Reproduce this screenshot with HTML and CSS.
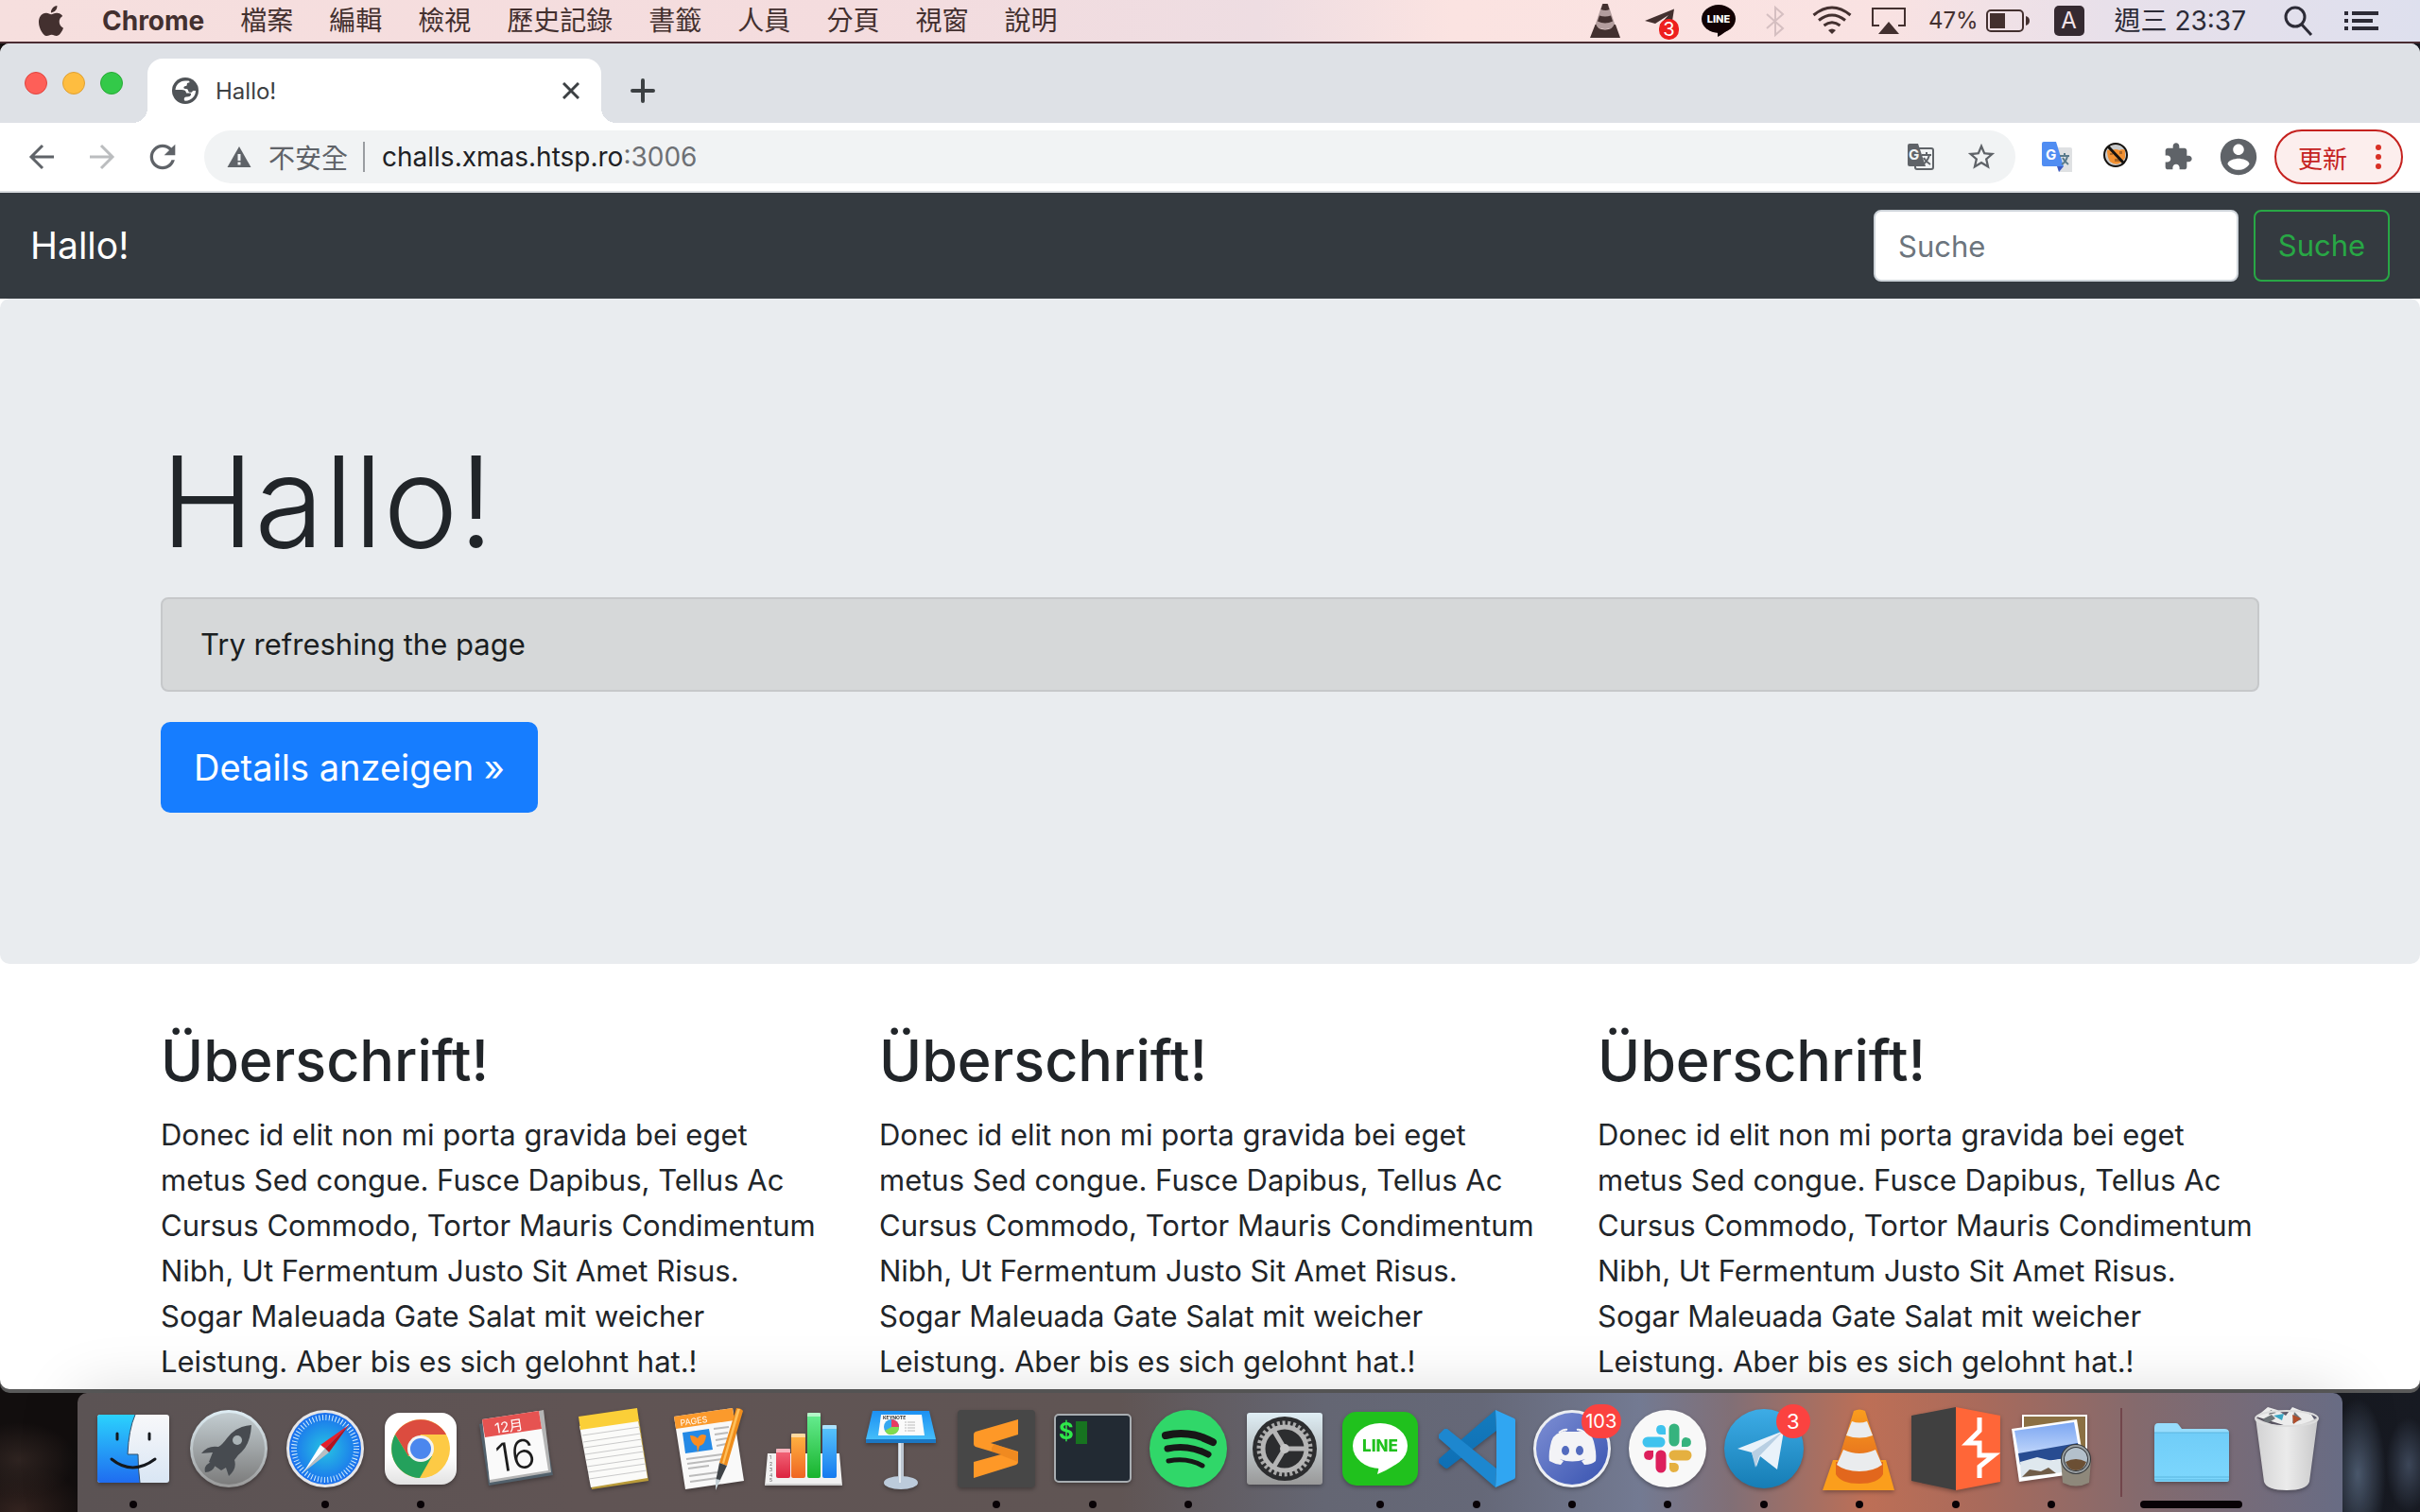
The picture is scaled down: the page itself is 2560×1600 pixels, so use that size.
FILE: index.html
```html
<!DOCTYPE html>
<html lang="zh-Hant">
<head>
<meta charset="utf-8">
<title>Hallo!</title>
<link rel="stylesheet" href="styles.css">
</head>
<body>
<header class="menubar">
  <nav class="menus">
    <button class="apple" aria-label="Apple"><svg width="32" height="32" viewBox="0 0 24 24"><path fill="currentColor" d="M12.152 6.896c-.948 0-2.415-1.078-3.96-1.04-2.04.027-3.91 1.183-4.961 3.014-2.117 3.675-.546 9.103 1.519 12.09 1.013 1.454 2.208 3.09 3.792 3.039 1.52-.065 2.09-.987 3.935-.987 1.831 0 2.35.987 3.96.948 1.637-.026 2.676-1.48 3.676-2.948 1.156-1.688 1.636-3.325 1.662-3.415-.039-.013-3.182-1.221-3.22-4.857-.026-3.04 2.48-4.494 2.597-4.559-1.429-2.09-3.623-2.324-4.39-2.376-2-.156-3.675 1.09-4.61 1.09zM15.53 3.83c.843-1.012 1.4-2.427 1.245-3.83-1.207.052-2.662.805-3.532 1.818-.78.896-1.454 2.338-1.273 3.714 1.338.104 2.715-.688 3.559-1.701"/></svg></button>
    <button class="app-name">Chrome</button>
    <button>檔案</button>
    <button>編輯</button>
    <button>檢視</button>
    <button>歷史記錄</button>
    <button>書籤</button>
    <button>人員</button>
    <button>分頁</button>
    <button>視窗</button>
    <button>說明</button>
  </nav>
  <div class="status">
    <div class="status-icons">
      <button aria-label="VLC"><svg width="40" height="44" viewBox="0 0 40 44"><path fill="#b39d9d" d="M17 4h6l8 24q-11 6-22 0z"/><path fill="#43302f" d="M17.500 4h5l2 6q-4 2-9 0zM14 16.500q6 2 12 0l2 6q-8 4-16 0zM9.500 26h1q1 5 9.500 5.500 8-.5 9.500-5.500h1.500l5 14H4z"/></svg></button>
      <button aria-label="Telegram"><svg width="44" height="44" viewBox="0 0 44 44"><path fill="#43302f" d="M4 22 35 9.500 31 35 20 26l9-10-14 9z"/><rect x="19" y="20" width="21" height="22" rx="10" fill="#ee1f1e"/><text x="29.500" y="38" text-anchor="middle" font-size="20" fill="#fff">3</text></svg></button>
      <button aria-label="LINE"><svg width="40" height="44" viewBox="0 0 40 44"><ellipse cx="20" cy="20" rx="18" ry="15" fill="#120204"/><path fill="#120204" d="M19 34v5q8-4 14-11z"/><text x="20" y="24" text-anchor="middle" font-size="11" font-weight="800" fill="#fff">LINE</text></svg></button>
      <button aria-label="藍牙"><svg width="40" height="44" viewBox="0 0 40 44"><path fill="none" stroke="#d5bfc1" stroke-width="2" d="m11 15 17 15-8 7V8l8 7-17 15"/></svg></button>
      <button aria-label="Wi-Fi"><svg width="44" height="44" viewBox="0 0 44 44" fill="none" stroke="#43302f" stroke-width="3"><path d="M2.500 16q19.500-16 39 0M8 21.500q14-11 28 0M13.500 27q8.500-6.500 17 0"/><path fill="#43302f" stroke="none" d="M18 32q4-3 8 0l-4 4z"/></svg></button>
      <button aria-label="AirPlay"><svg width="40" height="44" viewBox="0 0 40 44"><path fill="none" stroke="#43302f" stroke-width="2" d="M10 27H3V9h34v18h-7"/><path fill="#43302f" d="m20 23 11 13H9z"/></svg></button>
    </div>
    <button class="battery"><span>47%</span><svg width="46" height="24" viewBox="0 0 46 24"><rect x="1" y="1" width="38" height="22" rx="4" fill="none" stroke="#43302f" stroke-width="2"/><path fill="#43302f" d="M4 4h16v16H4zM42 7q4 1 4 5t-4 5z"/></svg></button>
    <button class="input-source" aria-label="輸入法"><span>A</span></button>
    <button class="clock">週三 23:37</button>
    <button aria-label="搜尋"><svg width="32" height="36" viewBox="0 0 32 36" fill="none" stroke="#2c2b36" stroke-width="3"><circle cx="12" cy="14" r="10"/><path d="m19 22 10 11"/></svg></button>
    <button aria-label="通知中心"><svg width="36" height="20" viewBox="0 0 36 20" fill="#2c2b36"><path d="M0 0h4v4H0zM8 0h28v4H8zM0 8h4v4H0zM8 8h22v4H8zM0 16h4v4H0zM8 16h28v4H8z"/></svg></button>
  </div>
</header>

<main class="window">
  <div class="tabstrip">
    <div class="lights"><button class="light red" aria-label="關閉"></button><button class="light yellow" aria-label="縮到最小"></button><button class="light green" aria-label="全螢幕"></button></div>
    <div class="tab">
      <svg width="28" height="28" viewBox="0 0 28 28"><circle cx="14" cy="14" r="14" fill="#4f5357"/><path fill="#fff" d="M15 3.500C8.500 3 4 7.500 3.500 13H10c3 0 5 1 5 3.500h4c2 0 1.500 4-3 4-3 0-3.500 1-3 4 6 1 12-4 12-10.500h-3c-1 3-5 2-5-.5 0-1.500-2-1.500-3-1.500-2.500 0-2-3 .5-3s0-3.500 3-3.500c1.500 0 1.500-1 0-2z"/></svg>
      <span class="tab-title">Hallo!</span>
      <button class="tab-close" aria-label="關閉分頁"><svg width="18" height="18" viewBox="0 0 18 18"><path stroke="#3c4043" stroke-width="3" d="m1 1 16 16M17 1 1 17"/></svg></button>
    </div>
    <button class="new-tab" aria-label="新分頁"><svg width="26" height="26" viewBox="0 0 26 26"><path stroke="#3c4043" stroke-width="4" stroke-linecap="round" d="M13 2v22M2 13h22"/></svg></button>
  </div>

  <div class="toolbar">
    <button class="tool" aria-label="上一頁"><svg width="28" height="28" viewBox="0 0 28 28" fill="none" stroke="#5f6368" stroke-width="3"><path d="M27 14H3M15 2 3 14l12 12"/></svg></button>
    <button class="tool" aria-label="下一頁"><svg width="28" height="28" viewBox="0 0 28 28" fill="none" stroke="#bbbdbf" stroke-width="3"><path d="M1 14h24M13 2l12 12-12 12"/></svg></button>
    <button class="tool" aria-label="重新載入"><svg width="40" height="40" viewBox="0 0 24 24"><path fill="#5f6368" d="M17.650 6.350C16.200 4.900 14.210 4 12 4c-4.420 0-7.990 3.580-7.990 8s3.570 8 7.990 8c3.730 0 6.840-2.550 7.730-6h-2.080c-.82 2.330-3.040 4-5.650 4-3.310 0-6-2.690-6-6s2.690-6 6-6c1.660 0 3.140.69 4.220 1.780L13 11h7V4l-2.350 2.350z"/></svg></button>
    <div class="omnibox">
      <button class="insecure"><svg width="26" height="24" viewBox="0 0 26 24"><path fill="#5f6368" d="M13 1 25.500 23H.5z"/><path fill="#f1f3f4" d="M11.500 9h3v7h-3zM11.500 17.500h3v3h-3z"/></svg><span>不安全</span></button>
      <input class="host" type="text" aria-label="網址" value="challs.xmas.htsp.ro"><span class="port">:3006</span>
      <button class="tool" aria-label="翻譯這個網頁"><svg width="28" height="28" viewBox="0 0 28 28"><rect x="8" y="5" width="19" height="22" rx="2" fill="#f1f3f4" stroke="#5f6368" stroke-width="2"/><path fill="#5f6368" d="M2 0h9l8 24H2q-2 0-2-2V2q0-2 2-2z"/><text x="1" y="17" font-size="15" font-weight="700" fill="#f1f3f4">G</text><path fill="none" stroke="#5f6368" stroke-width="2" d="M15 12h10M20 9v3M23 12q-2 7-7 10M17 15q2 4 7 7"/></svg></button>
      <button class="tool" aria-label="加入書籤"><svg width="34" height="34" viewBox="0 0 24 24"><path fill="#5f6368" d="M22 9.240l-7.190-.62L12 2 9.190 8.630 2 9.240l5.460 4.730L5.820 21 12 17.270 18.180 21l-1.630-7.030L22 9.240zM12 15.400l-3.760 2.270 1-4.280-3.320-2.880 4.380-.38L12 6.100l1.710 4.040 4.380.38-3.320 2.880 1 4.280L12 15.400z"/></svg></button>
    </div>
    <div class="extensions">
      <button class="tool" aria-label="Google 翻譯"><svg width="32" height="32" viewBox="0 0 32 32"><path fill="#dfe1e3" d="M13 6h17q2 0 2 2v24H18z"/><path fill="#3c5bc4" d="M16 26h7l-5 6z"/><path fill="#508df2" d="M2 0h13l8 26H2q-2 0-2-2V2q0-2 2-2z"/><text x="4" y="19" font-size="15" font-weight="700" fill="#fff">G</text><path fill="none" stroke="#5a7b8c" stroke-width="2" d="M19 15h10M24 12v3M27 15q-1 6-6 9M22 17q2 4 6 7"/></svg></button>
      <button class="tool" aria-label="Cookie 擴充功能"><svg width="30" height="32" viewBox="0 0 30 32"><circle cx="13" cy="14" r="12" fill="#c9cacb" stroke="#15120f" stroke-width="2"/><path fill="#f29132" d="M4 9q3-1 5 0 4-2 8 0 3-2 6 0v8q-7 11-16 4-3-5-3-12z"/><path fill="#ad6827" d="M7 12h3v2H7zM12 18h7v3h-7zM17 10h3v3h-3z"/><path stroke="#15120f" stroke-width="3" d="m5 5 17 18"/></svg></button>
      <button class="tool" aria-label="擴充功能"><svg width="32" height="32" viewBox="0 0 24 24"><path fill="#5f6368" d="M20.500 11H19V7c0-1.100-.9-2-2-2h-4V3.500C13 2.120 11.880 1 10.500 1S8 2.120 8 3.500V5H4c-1.100 0-1.990.9-1.990 2v3.800H3.500c1.490 0 2.700 1.210 2.700 2.700s-1.210 2.700-2.700 2.700H2V20c0 1.100.9 2 2 2h3.800v-1.500c0-1.490 1.210-2.700 2.700-2.700 1.490 0 2.700 1.210 2.700 2.700V22H17c1.100 0 2-.9 2-2v-4h1.500c1.380 0 2.500-1.120 2.500-2.500S21.880 11 20.500 11z"/></svg></button>
      <button class="tool" aria-label="使用者"><svg width="46" height="46" viewBox="0 0 24 24"><path fill="#5f6368" d="M12 2C6.480 2 2 6.480 2 12s4.480 10 10 10 10-4.480 10-10S17.520 2 12 2zm0 3c1.660 0 3 1.340 3 3s-1.340 3-3 3-3-1.340-3-3 1.340-3 3-3zm0 14.200c-2.500 0-4.710-1.280-6-3.220.03-1.990 4-3.080 6-3.080 1.990 0 5.970 1.090 6 3.080-1.290 1.940-3.500 3.220-6 3.220z"/></svg></button>
    </div>
    <button class="update"><span>更新</span><svg width="6" height="26" viewBox="0 0 6 26" fill="#d93025"><circle cx="3" cy="3" r="3"/><circle cx="3" cy="13" r="3"/><circle cx="3" cy="23" r="3"/></svg></button>
  </div>

  <div class="page" lang="de">
    <nav class="navbar">
      <a class="brand" href="#">Hallo!</a>
      <form class="search">
        <input type="text" placeholder="Suche" aria-label="Suche">
        <button type="button">Suche</button>
      </form>
    </nav>
    <section class="jumbotron">
      <div class="container">
        <h1>Hallo!</h1>
        <div class="alert">Try refreshing the page</div>
        <a class="primary" href="#">Details anzeigen »</a>
      </div>
    </section>
    <div class="container columns">
      <section><h2>Überschrift!</h2><p>Donec id elit non mi porta gravida bei eget metus Sed congue. Fusce Dapibus, Tellus Ac Cursus Commodo, Tortor Mauris Condimentum Nibh, Ut Fermentum Justo Sit Amet Risus. Sogar Maleuada Gate Salat mit weicher Leistung. Aber bis es sich gelohnt hat.!</p></section>
      <section><h2>Überschrift!</h2><p>Donec id elit non mi porta gravida bei eget metus Sed congue. Fusce Dapibus, Tellus Ac Cursus Commodo, Tortor Mauris Condimentum Nibh, Ut Fermentum Justo Sit Amet Risus. Sogar Maleuada Gate Salat mit weicher Leistung. Aber bis es sich gelohnt hat.!</p></section>
      <section><h2>Überschrift!</h2><p>Donec id elit non mi porta gravida bei eget metus Sed congue. Fusce Dapibus, Tellus Ac Cursus Commodo, Tortor Mauris Condimentum Nibh, Ut Fermentum Justo Sit Amet Risus. Sogar Maleuada Gate Salat mit weicher Leistung. Aber bis es sich gelohnt hat.!</p></section>
    </div>
  </div>
</main>

<svg class="defs" aria-hidden="true"><defs>
  <linearGradient id="finderBlue" x2="0" y2="1"><stop stop-color="#2bd2fd"/><stop offset="1" stop-color="#1f6cf0"/></linearGradient>
  <linearGradient id="finderWhite" x2="0" y2="1"><stop stop-color="#f8f8fa"/><stop offset="1" stop-color="#d9e6f4"/></linearGradient>
  <linearGradient id="steel" x2="0" y2="1"><stop stop-color="#c3cdd1"/><stop offset="1" stop-color="#7c7c7c"/></linearGradient>
  <linearGradient id="rim" x2="0" y2="1"><stop stop-color="#dfeef5"/><stop offset="1" stop-color="#999"/></linearGradient>
  <radialGradient id="safari"><stop stop-color="#27c3e2"/><stop offset="1" stop-color="#1a6fee"/></radialGradient>
  <linearGradient id="white" x2="0" y2="1"><stop offset=".6" stop-color="#fff"/><stop offset="1" stop-color="#e2e2e2"/></linearGradient>
  <linearGradient id="red" x2="0" y2="1"><stop stop-color="#f46a7c"/><stop offset="1" stop-color="#dc2440"/></linearGradient>
  <linearGradient id="orange" x2="0" y2="1"><stop stop-color="#ffb643"/><stop offset="1" stop-color="#ef6522"/></linearGradient>
  <linearGradient id="green" x2="0" y2="1"><stop stop-color="#68ee93"/><stop offset="1" stop-color="#18b32c"/></linearGradient>
  <linearGradient id="blue" x2="0" y2="1"><stop stop-color="#5bc8fb"/><stop offset="1" stop-color="#147af0"/></linearGradient>
  <linearGradient id="keynote" x2="0" y2="1"><stop stop-color="#1c90f3"/><stop offset="1" stop-color="#45bdf9"/></linearGradient>
  <linearGradient id="discord" x2="1" y2="1"><stop stop-color="#7e8fd4"/><stop offset="1" stop-color="#3853b0"/></linearGradient>
  <linearGradient id="telegram" x2="0" y2="1"><stop stop-color="#3dace6"/><stop offset="1" stop-color="#167db5"/></linearGradient>
  <linearGradient id="sky" x2="0" y2="1"><stop stop-color="#7ba6f2"/><stop offset="1" stop-color="#c6dafb"/></linearGradient>
  <linearGradient id="cone" x2="0" y2="1"><stop stop-color="#fa9d1e"/><stop offset="1" stop-color="#e2691e"/></linearGradient>
  <linearGradient id="folder" x2="0" y2="1"><stop stop-color="#70cdf8"/><stop offset="1" stop-color="#7dd7fd"/></linearGradient>
  <linearGradient id="bin"><stop stop-color="#d2d2d3"/><stop offset=".5" stop-color="#ebebeb"/><stop offset="1" stop-color="#c9c9ca"/></linearGradient>
  <linearGradient id="code" x2="0" y2="1"><stop stop-color="#147bbd"/><stop offset="1" stop-color="#0e6fb5"/></linearGradient>
</defs></svg>

<footer class="dock">
  <button class="app running" aria-label="Finder"><svg viewBox="0 0 96 96"><rect x="10" y="12" width="76" height="72" rx="3" fill="url(#finderWhite)"/><path fill="url(#finderBlue)" d="M13 12h37q-7 16-8 42h11q0 15 2 30H13q-3 0-3-3V15q0-3 3-3z"/><path fill="none" stroke="#33506b" d="M50 12q-7 16-8 42h11q0 15 2 30"/><path fill="none" stroke="#15181d" stroke-width="3" stroke-linecap="round" d="M31 32v6M65 32v6M25 59q22 18 46 0"/></svg></button>
  <button class="app" aria-label="Launchpad"><svg viewBox="0 0 96 96"><circle cx="48" cy="48" r="41" fill="url(#rim)"/><circle cx="48" cy="48" r="38" fill="url(#steel)"/><path fill="#474b50" d="M72 23q-16 1-26 14-5 7-9 9-11-2-18 7l12-1-4 10 13 9 5-3 3 9q9-8 6-17 3-5 8-9 9-9 10-28zM30 62q-9 3-7 11 8 0 11-8z"/><circle cx="57" cy="39" r="5" fill="#aab3b6"/></svg></button>
  <button class="app running" aria-label="Safari"><svg viewBox="0 0 96 96"><circle cx="48" cy="48" r="41" fill="#e6e6e8"/><circle cx="48" cy="48" r="38" fill="url(#safari)"/><circle cx="48" cy="48" r="33" fill="none" stroke="#d5eefc" stroke-width="6" stroke-dasharray="1 2.460"/><path fill="#e61f2b" d="M73 23 43 44l5 4z"/><path fill="#b4121d" d="m73 23-21 29-4-4z"/><path fill="#fff" d="M25 73 43 44l5 4z"/><path fill="#b9bec2" d="m25 73 27-21-4-4z"/></svg></button>
  <button class="app running" aria-label="Chrome"><svg viewBox="0 0 96 96"><rect x="10" y="10" width="76" height="76" rx="16" fill="url(#white)"/><circle cx="48" cy="48" r="31" fill="#fdca45"/><path fill="#dc4c3f" d="M21 33a31 31 0 0 1 54 0H48L35 56z"/><path fill="#24a15c" d="M21 33a31 31 0 0 0 26 46l13-23-25 0z"/><path fill="#fdca45" d="M75 34H48l13 22-13 23a31 31 0 0 0 27-45z"/><circle cx="48" cy="48" r="14" fill="#f3f3f3"/><circle cx="48" cy="48" r="11" fill="#4b87ee"/></svg></button>
  <button class="app" aria-label="行事曆"><svg viewBox="0 0 96 96"><path fill="#52616c" d="m8 22 66-14 12 68-68 11z"/><path fill="#b5b5b5" d="m13 20 63-13 8 66-65 11z"/><path fill="#fafafa" d="m11 17 60-9 10 63-62 10z"/><path fill="#e65351" d="m11 17 60-9 3 19-60 9z"/><g transform="rotate(-9 46 48)"><text x="43" y="29" text-anchor="middle" font-size="15" fill="#fff">12月</text><text x="45" y="70" text-anchor="middle" font-size="42" font-weight="300" fill="#1c1c1c">16</text></g></svg></button>
  <button class="app" aria-label="備忘錄"><svg viewBox="0 0 96 96"><path fill="#b99b3a" d="m15 28 61-11 10 65-60 9z"/><path fill="#fbfbf9" d="m13 24 61-12 11 67-60 10z"/><path fill="#fbcf38" d="m12 14 62-9 2 14-62 9z"/><path stroke="#cacaca" d="m16 34 61-9M17 41l61-9M18 47l61-9M19 54l61-9M20 60l61-9M21 67l61-9M22 73l61-9M23 80l61-9"/></svg></button>
  <button class="app" aria-label="Pages"><svg viewBox="0 0 96 96"><path fill="#f9f9f9" d="m11 14 62-9 12 77-62 9z"/><path fill="#fb9a2c" d="m11 14 62-9 2 13-62 9z"/><text x="18" y="24" transform="rotate(-8 18 24)" font-size="9" fill="#fff">PAGES</text><path fill="#2489e5" d="m20 31 28-4 4 22-29 4z"/><path fill="#fa8c20" d="M28 34q5 0 8 3 3-6 9-3-1 10-7 11l-2 7-1-7q-6-2-7-11z"/><path stroke="#bbb" stroke-width="2" d="m53 27 16-2M54 33l14-2M55 39l12-2M56 45l10-2M24 59l38-5M25 64l37-5M26 69l22-3M27 77l30-4M28 83l29-4"/><path fill="#ef8d1c" d="M77 5q5 0 7 3L67 66l-8-3z"/><path fill="#ffc05c" d="M78 6h3L64 64l-2-1z"/><path fill="#3f4347" d="m59 63 8 3-8 17-4 0z"/><path fill="#c7d2d8" d="m55 80 5 1-5 11z"/></svg></button>
  <button class="app" aria-label="Numbers"><svg viewBox="0 0 96 96"><path fill="#f1f1f1" d="M9 53h76l3 34H6z"/><path fill="#cfcfcf" d="M6 85h82v2H6z"/><g font-size="5" fill="#666"><text x="11" y="59">1</text><text x="11" y="66">2</text><text x="11" y="72">3</text><text x="11" y="78">4</text><text x="11" y="83">5</text></g><rect x="18" y="48" width="15" height="31" rx="2" fill="url(#red)"/><rect x="34" y="32" width="15" height="47" rx="2" fill="url(#orange)"/><rect x="51" y="10" width="14" height="69" rx="2" fill="url(#green)"/><rect x="67" y="23" width="15" height="56" rx="2" fill="url(#blue)"/><path stroke="#fff" stroke-opacity=".5" stroke-width="4" d="M18 50h15M34 34h15M51 12h14M67 25h15"/></svg></button>
  <button class="app" aria-label="Keynote"><svg viewBox="0 0 96 96"><path fill="#bdc6d1" d="M45 40h6v46h-6z"/><ellipse cx="48" cy="84" rx="18" ry="7" fill="#bccbdb"/><path fill="#e2eaf1" d="M46 40h2v44h-2z"/><path fill="url(#keynote)" d="M18 8h60l7 30H11z"/><path fill="#1b77c4" d="M11 38h74v4H11z"/><path fill="#fbfbfb" d="M27 12h43l3 22H24z"/><text x="29" y="17" font-size="5" font-weight="700" fill="#333">KEYNOTE</text><circle cx="38" cy="25" r="8" fill="#35a7f0"/><path fill="#e83b62" d="M38 25v-8a8 8 0 0 1 8 8z"/><path fill="#82db4e" d="M46 25a8 8 0 0 1-15 4l7-4z"/><path stroke="#bbb" stroke-dasharray="2 1 8 9" d="M52 20h15M52 23h15M52 26h15M52 29h15"/></svg></button>
  <button class="app running" aria-label="Sublime Text"><svg viewBox="0 0 96 96"><rect x="7" y="7" width="82" height="82" rx="4" fill="#474747"/><path fill="#fe9827" d="M24 33q0-2 2-3l45-13v16L42 42l29 9v11q0 2-2 3L24 79V62l29-8-27-8q-2-1-2-3z"/><path fill="#e17c19" d="m43 51 28 11v-10l-25-9-3 4z" opacity=".5"/></svg></button>
  <button class="app running" aria-label="終端機"><svg viewBox="0 0 96 96"><rect x="8" y="12" width="80" height="71" rx="4" fill="#222a33" stroke="#a8adb1" stroke-width="2"/><text x="12" y="38" font-size="24" font-weight="700" fill="#2fe84a">$</text><path fill="#177320" d="M30 19h12v24H30z"/></svg></button>
  <button class="app running" aria-label="Spotify"><svg viewBox="0 0 96 96"><circle cx="48" cy="48" r="41" fill="#30d769"/><path fill="none" stroke="#171717" stroke-linecap="round" stroke-width="8" d="M24 34q26-6 50 7"/><path fill="none" stroke="#171717" stroke-linecap="round" stroke-width="7" d="M26 48q22-5 43 6"/><path fill="none" stroke="#171717" stroke-linecap="round" stroke-width="5" d="M27 61q20-4 36 5"/></svg></button>
  <button class="app" aria-label="系統偏好設定"><svg viewBox="0 0 96 96"><rect x="8" y="10" width="80" height="76" rx="3" fill="url(#rim)"/><circle cx="48" cy="48" r="34" fill="#2c2d2f"/><circle cx="48" cy="48" r="27" fill="none" stroke="#aaa" stroke-width="5" stroke-dasharray="3 2.650"/><circle cx="48" cy="48" r="23" fill="none" stroke="#b5b5b5" stroke-width="5"/><path fill="none" stroke="#b5b5b5" stroke-width="5" d="M48 48h23M48 48 36 28M48 48 36 68"/><circle cx="48" cy="48" r="5" fill="#c4c4c4"/></svg></button>
  <button class="app running" aria-label="LINE"><svg viewBox="0 0 96 96"><rect x="8" y="9" width="80" height="78" rx="15" fill="#20c11d"/><ellipse cx="48" cy="45" rx="29" ry="24" fill="#fff"/><path fill="#fff" d="M46 65q1 5-1 10 18-7 27-18z"/><text x="48" y="51" text-anchor="middle" font-size="17" font-weight="800" fill="#20c11d">LINE</text></svg></button>
  <button class="app running" aria-label="Visual Studio Code"><svg viewBox="0 0 96 96"><path fill="url(#code)" d="m68 7 1 22-52 40q-2 0-3-1l-6-5v-4z"/><path fill="#1d87cf" d="m8 33 6-6h3l52 42-1 20L8 37z"/><path fill="#30a6f2" d="m68 7 20 9q1 1 1 2v60q0 1-1 2l-20 9 1-20V29z"/></svg></button>
  <button class="app running" aria-label="Discord"><svg viewBox="0 0 96 96"><circle cx="48" cy="48" r="41" fill="#eceef2"/><circle cx="48" cy="48" r="38" fill="url(#discord)"/><path fill="#f3f3f6" d="M35 31q6-3 7-1h12q3-2 9 1 7 2 9 14 2 9 1 16-4 4-12 4l-3-4 4-2q-14 5-27 0l4 2-3 4q-7-1-12-4-1-7 1-16 2-12 10-14z"/><path fill="none" stroke="#f3f3f6" stroke-width="2" d="M34 31q6-4 9-3M62 31q-6-4-9-3"/><ellipse cx="41" cy="50" rx="4" ry="5" fill="#526abe"/><ellipse cx="56" cy="50" rx="4" ry="5" fill="#526abe"/></svg><span class="badge wide">103</span></button>
  <button class="app running" aria-label="Slack"><svg viewBox="0 0 96 96"><circle cx="48" cy="48" r="41" fill="#f8f8f8"/><g stroke-linecap="round" stroke-width="11"><path stroke="#3fc3ee" d="M27 41h13"/><path stroke="#36b37e" d="M55 27v13"/><path stroke="#e5b040" d="M55 55h13"/><path stroke="#dd1f5c" d="M41 55v13"/></g><path fill="#3fc3ee" d="M46 33V27a5 5 0 1 0-5 6z"/><path fill="#36b37e" d="M63 46v-6a5 5 0 1 1 6 6z"/><path fill="#e5b040" d="M50 63h6a5 5 0 1 1-6 6z"/><path fill="#dd1f5c" d="M33 50v6a5 5 0 1 1-6-6z"/></svg></button>
  <button class="app running" aria-label="Telegram"><svg viewBox="0 0 96 96"><circle cx="48" cy="48" r="42" fill="url(#telegram)"/><path fill="#e9f2fa" d="M20 48 69 29l-7 41-18-14-4 11-5-15z"/><path fill="#b8cfe3" d="m35 52 34-23-26 27-4 12z"/></svg><span class="badge">3</span></button>
  <button class="app running" aria-label="VLC"><svg viewBox="0 0 96 96"><path fill="#fb9e1c" d="M20 60h56l9 32H9z"/><path fill="#e2671d" d="M23 62h50v13q-5 10-25 10T23 75z"/><path fill="url(#cone)" d="M42 8q6-3 12 0l18 57q-8 8-24 8t-24-8z"/><path fill="#eaecee" d="M40 19q8 3 16 0l6 15q-14 5-28 0zM31 49q17 8 34 0l7 16q-9 7-24 7t-24-7z"/></svg></button>
  <button class="app running" aria-label="Burp Suite"><svg viewBox="0 0 96 96"><path fill="#404040" d="M1 13 48 4v88L1 82z"/><path fill="#ff6638" d="m48 4 47 9v70l-47 9z"/><path fill="none" stroke="#fff" stroke-width="5" d="M73 15v14L60 42h13v13h15L73 67v12"/></svg></button>
  <button class="app running" aria-label="預覽程式"><svg viewBox="0 0 96 96"><path fill="#fff" d="M17 12h69v58H17z"/><path fill="#8b7043" d="M19 14h65v54H19z"/><path fill="#fff" d="m6 27 69-10 9 56-70 10z"/><path fill="url(#sky)" d="m9 29 63-9 5 27-63 10z"/><path fill="#284c91" d="m13 53 63-11 2 14-63 9z"/><path fill="#dfe8ee" d="m15 62 18-5 16 4 29-7 3 16-65 9z"/><path fill="#705d48" d="m17 78 8-8 12 2 8-4 8 6z"/><path fill="#8e887b" d="M58 60h32l-2 24q-14 7-28 0z"/><circle cx="74" cy="59" r="16" fill="#34373a"/><circle cx="74" cy="59" r="14" fill="none" stroke="#9aa0a3" stroke-width="2"/><circle cx="74" cy="59" r="12" fill="#b3c0cb"/><path fill="#6b4f34" d="M63 62q11-6 22 0-3 9-11 9t-11-9z"/></svg></button>
  <span class="divider"></span>
  <button class="app stack" aria-label="檔案夾"><svg viewBox="0 0 96 96"><path fill="#97dcfc" d="M9 26q0-5 4-5h19q2 0 3 2l3 4h45q5 0 5 4v20H9z"/><path fill="url(#folder)" d="M9 31h79v50q0 2-3 2H12q-3 0-3-2z"/><path stroke="#5bb6df" d="M9 31h79M9 78h79M9 81h79"/></svg></button>
  <button class="app" aria-label="垃圾桶"><svg viewBox="0 0 96 96"><path fill="#ececec" d="m16 14 12-10 10 3 9 6 7-9 20 8 5 8-28 5z"/><path fill="#6e7478" d="m22 17 10-5 4 4-8 5zM56 9l8 8-10 4zM31 7l6 3-8 2z"/><path fill="#39a6c4" d="m34 13 11-2-2 7z"/><path fill="#b04d2a" d="m54 12 9 4-8 6z"/><path fill="url(#bin)" d="M15 15q33 18 66 0l-9 68q-3 9-24 9t-24-9z"/><ellipse cx="48" cy="16" rx="33" ry="8" fill="none" stroke="#ddd" stroke-width="2"/></svg></button>
</footer>
</body>
</html>
```

FILE: styles.css
```css
* {
  box-sizing: border-box;
}

body {
  margin: 0;
  min-height: 100vh;
  display: flex;
  flex-direction: column;
  overflow: hidden;
  font-family: Inter, "Noto Sans CJK TC", sans-serif;
  color: #212529;
  background:
    radial-gradient(ellipse 60px 40px at 20px calc(100% - 55px), #2e2320, transparent),
    radial-gradient(ellipse 70px 50px at 20px 100%, #33231f, transparent),
    radial-gradient(ellipse 30px 80px at calc(100% - 66px) calc(100% - 40px), #4d5b70, transparent),
    radial-gradient(ellipse 24px 50px at calc(100% - 12px) calc(100% - 50px), #3c4658, transparent),
    linear-gradient(90deg, #120e0e 50%, #171a22);
}

button,
input {
  margin: 0;
  padding: 0;
  border: 0;
  background: none;
  font: inherit;
  color: inherit;
}

button {
  display: flex;
  align-items: center;
  justify-content: center;
}

svg {
  display: block;
  flex: none;
}

.defs {
  position: absolute;
  width: 0;
  height: 0;
}

/* Menu bar */
.menubar {
  display: flex;
  justify-content: space-between;
  height: 46px;
  padding: 0 44px 0 38px;
  border-bottom: 2px solid #4a2c32;
  background: linear-gradient(90deg, #f6dfde, #f4dcde 35%, #eedde2 52%, #fbe3e1 60%, #f9e2e2 78%, #e8e0ea 87%, #dee0ee);
  font-size: 28px;
  line-height: 44px;
  color: #43302f;
}

.menus,
.status,
.status-icons {
  display: flex;
  align-items: center;
}

.menus {
  gap: 38px;
}

.menus .app-name {
  font-weight: 700;
}

.status {
  gap: 32px;
  color: #2c2b36;
}

.status-icons button {
  width: 60px;
}

.status-icons {
  margin-right: -20px;
}

.battery {
  gap: 8px;
  margin-right: -6px;
  font-size: 24px;
  color: #43302f;
}

.input-source {
  width: 32px;
  height: 32px;
  border-radius: 5px;
  background: #352a31;
  color: #f3e2e8;
  font-size: 24px;
}

.clock {
  margin-right: 8px;
}

/* Browser window */
.window {
  flex: 1;
  margin-bottom: 4px;
  overflow: hidden;
  border-radius: 10px;
  background: #fff;
  box-shadow: 0 4px 0 #5a5a5a;
}

.tabstrip {
  display: flex;
  align-items: flex-end;
  height: 84px;
  background: #dee1e6;
}

.lights {
  display: flex;
  gap: 16px;
  align-self: center;
  width: 156px;
  padding-left: 26px;
}

.light {
  width: 24px;
  height: 24px;
  border-radius: 50%;
  border: 1px solid #e0443e;
  background: #fe5f58;
}

.light.yellow {
  border-color: #dea034;
  background: #febd40;
}

.light.green {
  border-color: #27aa35;
  background: #33c949;
}

.tab {
  position: relative;
  display: flex;
  align-items: center;
  gap: 18px;
  width: 480px;
  height: 68px;
  padding: 0 16px 0 26px;
  border-radius: 16px 16px 0 0;
  background: #fff;
  font-size: 24px;
  color: #3c4043;
}

.tab::before,
.tab::after {
  content: "";
  position: absolute;
  bottom: 0;
  width: 16px;
  height: 16px;
}

.tab::before {
  right: 100%;
  background: radial-gradient(circle at 0 0, transparent 16px, #fff 16px);
}

.tab::after {
  left: 100%;
  background: radial-gradient(circle at 100% 0, transparent 16px, #fff 16px);
}

.tab-title {
  flex: 1;
}

.tab-close {
  width: 32px;
  height: 32px;
}

.new-tab {
  width: 88px;
  height: 68px;
}

.toolbar {
  display: flex;
  align-items: center;
  height: 74px;
  padding: 0 18px 0 12px;
  border-bottom: 2px solid #d9dce0;
  font-size: 28px;
}

.tool {
  width: 64px;
  height: 56px;
}

.omnibox {
  flex: 1;
  display: flex;
  align-items: center;
  height: 56px;
  margin: 0 12px;
  padding: 0 4px 0 24px;
  border-radius: 28px;
  background: #f1f3f4;
  color: #202124;
}

.insecure {
  gap: 18px;
  height: 32px;
  margin-right: 18px;
  padding-right: 16px;
  border-right: 2px solid #9a9da1;
  color: #5f6368;
}

.host {
  field-sizing: content;
}

.port {
  flex: 1;
  color: #6d7074;
}

.extensions {
  display: flex;
}

.update {
  gap: 30px;
  width: 136px;
  height: 58px;
  margin-left: 6px;
  padding-left: 2px;
  border: 2px solid #c5221f;
  border-radius: 29px;
  background: #fceeed;
  color: #c5221f;
  font-size: 26px;
}

/* Web page */
.page {
  font-size: 31px;
  line-height: 48px;
}

.navbar {
  display: flex;
  align-items: center;
  justify-content: space-between;
  height: 112px;
  padding: 0 32px;
  background: #343a40;
}

.brand {
  color: #fff;
  font-size: 39px;
  text-decoration: none;
}

.search {
  display: flex;
  gap: 16px;
}

.search input {
  width: 386px;
  height: 76px;
  padding: 0 24px;
  border: 2px solid #ced4da;
  border-radius: 8px;
  background: #fff;
}

.search input::placeholder {
  color: #6c757d;
  opacity: 1;
}

.search button {
  width: 144px;
  height: 76px;
  border: 2px solid #28a745;
  border-radius: 8px;
  color: #28a745;
}

.container {
  max-width: 2280px;
  margin: 0 auto;
  padding: 0 30px;
}

.jumbotron {
  padding: 128px 0 160px;
  border-radius: 10px;
  background: #e9ecef;
}

h1,
h2,
p {
  margin: 0;
}

h1 {
  margin-bottom: 16px;
  font-size: 134px;
  font-weight: 300;
  line-height: 172px;
}

.alert {
  margin-bottom: 32px;
  padding: 24px 40px;
  border: 2px solid #c6c8ca;
  border-radius: 8px;
  background: #d6d8d9;
  color: #1b1e21;
}

.primary {
  display: inline-block;
  padding: 18px 35px;
  border-radius: 10px;
  background: #167dff;
  color: #fff;
  font-size: 38px;
  line-height: 60px;
  text-decoration: none;
}

.columns {
  display: grid;
  grid-template-columns: repeat(3, 1fr);
  gap: 60px;
  padding-top: 64px;
}

h2 {
  margin-bottom: 16px;
  font-size: 61px;
  font-weight: 500;
  line-height: 77px;
}

/* Dock */
.dock {
  position: relative;
  display: flex;
  height: 126px;
  margin: 0 82px;
  padding: 0 8px;
  border-radius: 10px 10px 0 0;
  background: linear-gradient(90deg, #5b5354, #605454 22%, #605554 46%, #646673 55%, #656878 62%, #737a92 69%, #816f76 73%, #bd6f56 79%, #a96a5b 84%, #846a6d 91%, #686c84);
  box-shadow: 0 0 64px rgba(0, 0, 0, .15);
}

.app {
  position: relative;
  flex: 1;
  min-width: 0;
  flex-direction: column;
  justify-content: flex-start;
  padding-top: 11px;
}

.app svg {
  width: 96px;
  height: 96px;
  filter: drop-shadow(0 2px 2px rgba(0, 0, 0, .3));
}

.running::after,
.stack::after {
  content: "";
  width: 8px;
  height: 8px;
  margin-top: 7px;
  border-radius: 4px;
  background: #080206;
}

.stack::after {
  width: 108px;
}

.badge {
  position: absolute;
  top: 12px;
  right: 2px;
  min-width: 36px;
  height: 36px;
  border-radius: 18px;
  background: #fb4240;
  color: #fff;
  font-size: 22px;
  line-height: 36px;
}

.badge.wide {
  right: -1px;
  min-width: 42px;
  font-size: 20px;
}

.divider {
  flex: none;
  width: 46px;
  margin: 16px 0;
  background: linear-gradient(#71464b, #71464b) center / 2px 100% no-repeat;
}
```
